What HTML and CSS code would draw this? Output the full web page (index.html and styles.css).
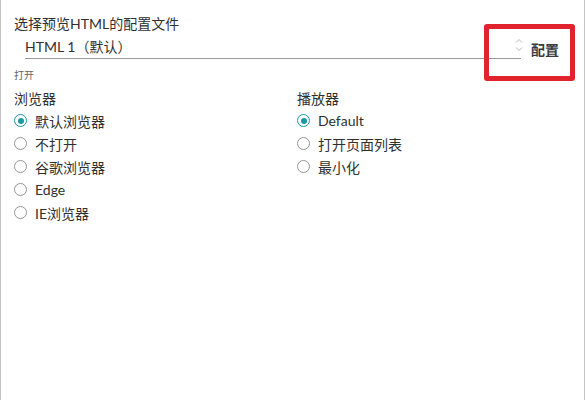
FILE: index.html
```html
<!DOCTYPE html>
<html lang="zh">
<head>
<meta charset="utf-8">
<link rel="stylesheet" href="styles.css">
</head>
<body>
<div class="frame">
  <div class="config">
    <div class="title">选择预览HTML的配置文件</div>
    <div class="select-row">
      <div class="select">
        <span class="value">HTML 1（默认）</span>
        <svg class="spin" width="10" height="16" viewBox="0 0 10 16"><path d="M2 5.5 L5 2.5 L8 5.5 M2 10.5 L5 13.5 L8 10.5" fill="none" stroke="#b8b8b8" stroke-width="1"/></svg>
      </div>
      <span class="cfg">配置</span>
    </div>
    <div class="highlight"></div>
  </div>
  <div class="section-label">打开</div>
  <div class="cols">
    <div class="col">
      <div class="group-title">浏览器</div>
      <label class="radio"><span class="dot on"></span>默认浏览器</label>
      <label class="radio"><span class="dot"></span>不打开</label>
      <label class="radio"><span class="dot"></span>谷歌浏览器</label>
      <label class="radio"><span class="dot"></span>Edge</label>
      <label class="radio"><span class="dot"></span>IE浏览器</label>
    </div>
    <div class="col">
      <div class="group-title">播放器</div>
      <label class="radio"><span class="dot on"></span>Default</label>
      <label class="radio"><span class="dot"></span>打开页面列表</label>
      <label class="radio"><span class="dot"></span>最小化</label>
    </div>
  </div>
</div>
</body>
</html>
```
FILE: styles.css
```css
html, body {
  margin: 0;
  padding: 0;
  background: #fff;
}
body {
  font-family: Lato, "Noto Sans CJK SC", sans-serif;
  color: #303030;
}
.frame {
  width: 585px;
  height: 400px;
  box-sizing: border-box;
  border-left: 1px solid #c4c4c4;
  border-right: 1px solid #c4c4c4;
  padding: 14px 0 0 13px;
  position: relative;
}
.config {
  position: relative;
}
.title {
  font-size: 14px;
  line-height: 20px;
}
.select-row {
  display: flex;
  align-items: center;
  margin-top: 2px;
}
.select {
  width: 496px;
  margin-left: 11px;
  height: 23px;
  border-bottom: 1px solid #9a9a9a;
  display: flex;
  align-items: center;
  justify-content: space-between;
  box-sizing: border-box;
}
.value {
  font-size: 14px;
  line-height: 20px;
  margin-top: -1px;
}
.spin {
  margin-right: -3px;
  margin-top: -4px;
}
.cfg {
  margin-left: 10px;
  font-size: 14px;
  color: #3a3a3a;
  font-weight: bold;
  margin-top: 2px;
}
.highlight {
  position: absolute;
  left: 470px;
  top: 10px;
  width: 91px;
  height: 57px;
  box-sizing: border-box;
  border: 5px solid #e0232c;
  border-radius: 3px;
}
.section-label {
  font-size: 10px;
  color: #666;
  margin-top: 9px;
  line-height: 14px;
}
.cols {
  display: flex;
  margin-top: 7px;
}
.col {
  width: 283px;
}
.group-title {
  font-size: 14px;
  line-height: 20px;
  margin-bottom: 0;
}
.radio {
  display: flex;
  align-items: center;
  font-size: 14px;
  height: 23px;
}
.dot {
  width: 13px;
  height: 13px;
  border: 1px solid #959595;
  border-radius: 50%;
  box-sizing: border-box;
  margin: 0 8px 0 0;
  position: relative;
}
.dot.on {
  border-color: #1a9aa2;
}
.dot.on::after {
  content: "";
  position: absolute;
  left: 2.5px;
  top: 2.5px;
  width: 6px;
  height: 6px;
  border-radius: 50%;
  background: #1a9aa2;
}
```
